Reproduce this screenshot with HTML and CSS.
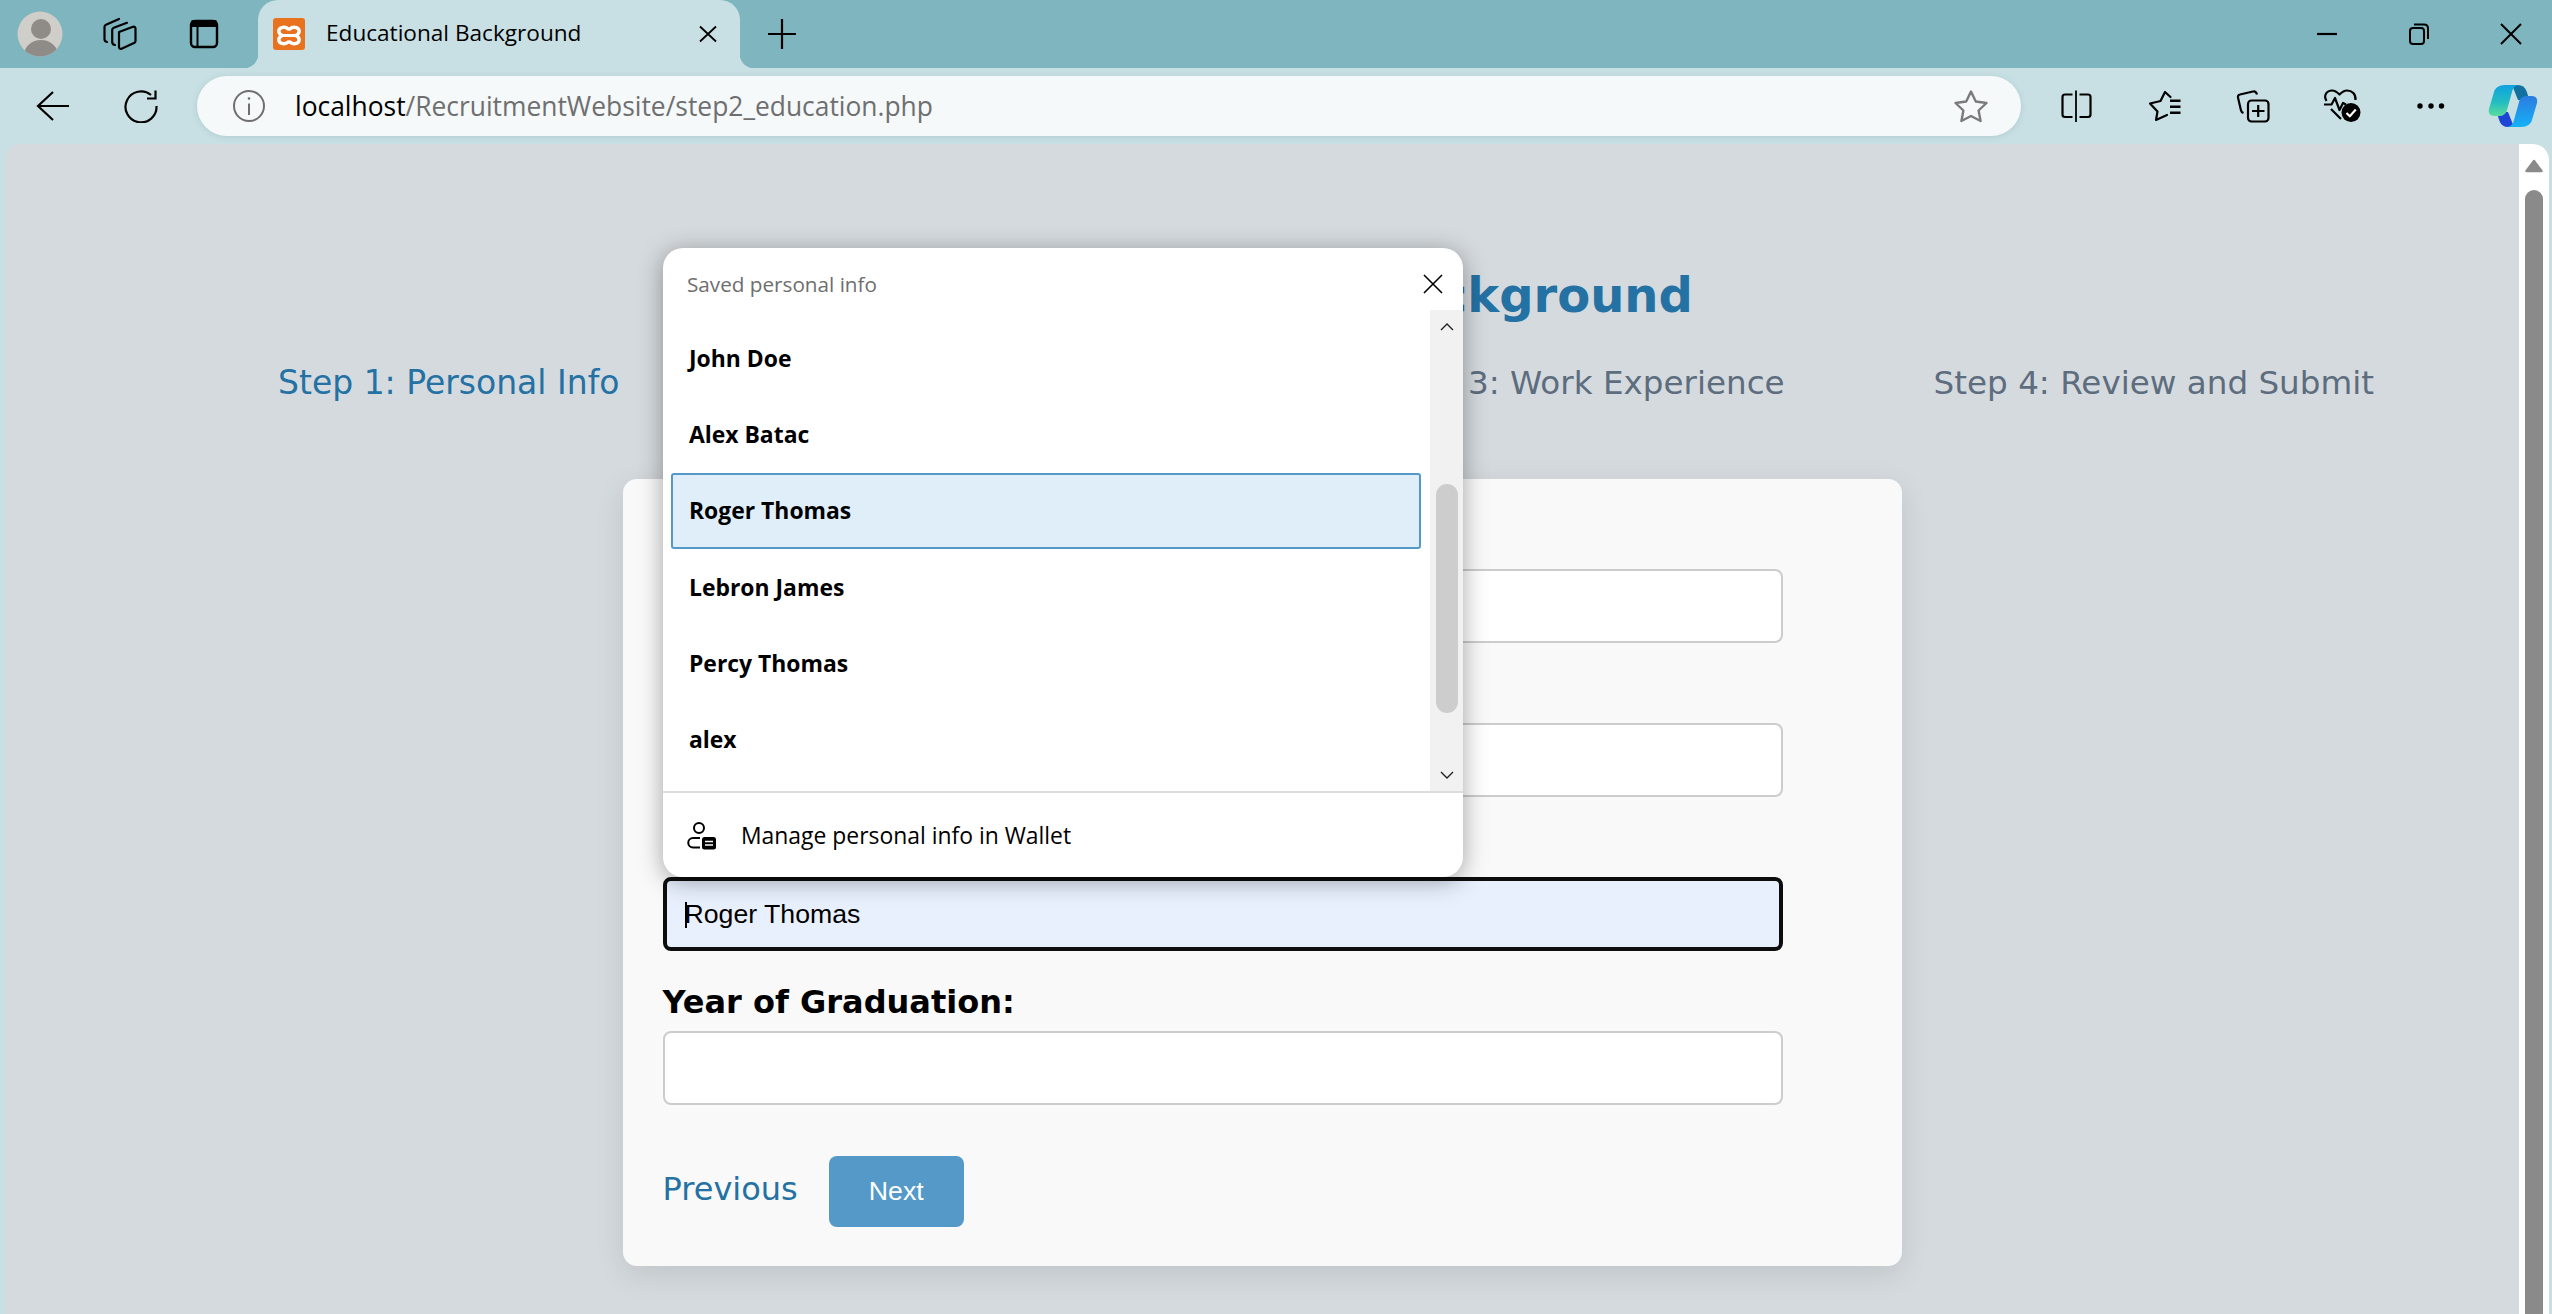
FILE: index.html
```html
<!DOCTYPE html>
<html lang="en">
<head>
  <meta charset="UTF-8">
  <title>Educational Background</title>
  <link rel="stylesheet" href="styles.css">
</head>
<body>
  <!-- tab strip -->
  <div class="tabstrip">
    <div class="strip-btn avatar-btn">
      <svg width="46" height="46" viewBox="17 11 46 46">
        <defs><clipPath id="avatarClip"><circle cx="40" cy="34" r="22.5"/></clipPath></defs>
        <circle cx="40" cy="34" r="22.5" fill="#d0cec9"/>
        <g clip-path="url(#avatarClip)" fill="#8f8b87">
          <circle cx="41" cy="29" r="10"/>
          <ellipse cx="41" cy="55" rx="17" ry="15"/>
        </g>
      </svg>
    </div>
    <div class="strip-btn workspaces-btn">
      <svg width="36" height="36" viewBox="104 16 36 36" fill="none" stroke="#000" stroke-width="2.2" stroke-linecap="round" stroke-linejoin="round">
        <path d="M120 32 L134 26.8 Q136.5 26.3 136.5 28.8 V41 Q136.5 42.6 135 43 L122.5 48.8 Q120 49.2 120 46.8 Z"/>
        <path d="M116 45 Q113.2 44.6 113.2 42 V30 Q113.2 28.4 114.8 27.8 L128 22.8"/>
        <path d="M108 42 Q105.5 41.6 105.5 39 V27 Q105.5 25.4 107 24.8 L120 19"/>
      </svg>
    </div>
    <div class="strip-btn panel-btn">
      <svg width="30" height="30" viewBox="190 19 30 30">
        <rect x="192" y="21" width="26" height="26" rx="4" fill="none" stroke="#000" stroke-width="2.4"/>
        <path d="M192 21.5 Q192 20 194 20 H216 Q218 20 218 21.5 V27 H192 Z" fill="#000"/>
        <path d="M198.5 27 V47" stroke="#000" stroke-width="2"/>
      </svg>
    </div>
    <div class="tab">
      <svg class="favicon" width="32" height="32" viewBox="0 0 32 32">
        <rect width="32" height="32" rx="3" fill="#e9721f"/>
        <path d="M15 11 C13 8.5 6 8.5 5.8 13 C5.8 16 8 17 9.5 17.5 C8 18 5.8 19 5.8 22 C6 26.5 13 26.5 15 24 H17 C19 26.5 26 26.5 26.2 22 C26.2 19 24 18 22.5 17.5 C24 17 26.2 16 26.2 13 C26 8.5 19 8.5 17 11 Z" fill="none" stroke="#fff" stroke-width="3.4" stroke-linejoin="round"/>
        <path d="M10 17.5 H22" stroke="#fff" stroke-width="3"/>
      </svg>
      <span class="tab-title">Educational Background</span>
      <svg class="tab-close" width="18" height="18" viewBox="0 0 18 18"><path d="M1 1.5 L17 16.5 M17 1.5 L1 16.5" stroke="#000" stroke-width="1.8"/></svg>
    </div>
    <div class="new-tab">
      <svg width="30" height="30" viewBox="0 0 30 30"><path d="M1 15 H29 M15 0 V30" stroke="#000" stroke-width="2.2"/></svg>
    </div>
    <div class="win-controls">
      <div class="win-btn"><svg width="22" height="4" viewBox="0 0 22 4"><path d="M1 2 H21" stroke="#000" stroke-width="2.2"/></svg></div>
      <div class="win-btn">
        <svg width="20" height="22" viewBox="0 0 20 22" fill="none" stroke="#000" stroke-width="2">
          <rect x="1" y="5" width="14" height="16" rx="3"/>
          <path d="M5 1.5 H15 Q19 1.5 19 5.5 V16"/>
        </svg>
      </div>
      <div class="win-btn"><svg width="22" height="22" viewBox="0 0 22 22"><path d="M1 1 L21 21 M21 1 L1 21" stroke="#000" stroke-width="2"/></svg></div>
    </div>
  </div>

  <!-- toolbar -->
  <div class="toolbar">
    <div class="nav-btn back-btn">
      <svg width="34" height="30" viewBox="36 90 34 30" fill="none" stroke="#000" stroke-width="2.2"><path d="M38 105 H69 M53 91 L38 105 L53 119"/></svg>
    </div>
    <div class="nav-btn reload-btn">
      <svg width="34" height="34" viewBox="124 89 34 34" fill="none" stroke="#000" stroke-width="2.2"><path d="M151 95 A15.5 15.5 0 1 0 156.5 106"/><path d="M155.5 90.5 V98.5 H147"/></svg>
    </div>
    <div class="address">
      <svg class="info" width="32" height="32" viewBox="0 0 32 32" fill="none" stroke="#6f6f6f" stroke-width="2">
        <circle cx="16" cy="16" r="15"/>
        <path d="M16 13.5 V25" stroke-width="2"/>
        <circle cx="16" cy="8.5" r="1.3" fill="#6f6f6f" stroke="none"/>
      </svg>
      <span class="url"><span class="url-host">localhost</span>/RecruitmentWebsite/step2_education.php</span>
      <svg class="star" width="36" height="34" viewBox="1953 89 36 34" fill="none" stroke="#7b7b7b" stroke-width="2.4" stroke-linejoin="round">
        <path d="M1971 91.5 L1975.8 101.5 L1986.5 103 L1978.6 110.5 L1980.6 121 L1971 116 L1961.4 121 L1963.4 110.5 L1955.5 103 L1966.2 101.5 Z"/>
      </svg>
    </div>
    <div class="tools">
      <div class="tool">
        <svg width="34" height="34" viewBox="2059 89 34 34" fill="none" stroke="#000" stroke-width="2.2">
          <path d="M2072.5 94.5 H2065 Q2062.5 94.5 2062.5 97 V114.5 Q2062.5 117 2065 117 H2072.5"/>
          <path d="M2076 90.5 V122" stroke-width="1.8"/>
          <path d="M2079.5 94.5 H2088 Q2090.5 94.5 2090.5 97 V114.5 Q2090.5 117 2088 117 H2079.5"/>
        </svg>
      </div>
      <div class="tool">
        <svg width="36" height="34" viewBox="2147 89 36 34" fill="none" stroke="#000" stroke-width="2.2" stroke-linejoin="round" stroke-linecap="round">
          <path d="M2170.5 97 L2165 92 L2160.5 101 L2150 103.5 L2157.5 111.5 L2156 120 L2167 115"/>
          <path d="M2170 100.7 H2180.5 M2170 106.7 H2180.5 M2170 112.7 H2180.5" stroke-linecap="butt" stroke-width="2.4"/>
        </svg>
      </div>
      <div class="tool">
        <svg width="36" height="36" viewBox="2235 88 36 36" fill="none" stroke="#000" stroke-width="2.2" stroke-linejoin="round">
          <path d="M2243.5 113 Q2241.5 112.5 2241 110.5 L2238 97.5 Q2237.5 95 2240 94.5 L2253 91.5 Q2256 91 2257 94.5"/>
          <rect x="2248" y="100.5" width="20.5" height="21" rx="3.5"/>
          <path d="M2258.2 105 V117 M2252 111 H2264.5"/>
        </svg>
      </div>
      <div class="tool">
        <svg width="40" height="36" viewBox="2323 90 40 36" fill="none" stroke="#000" stroke-width="2.2" stroke-linejoin="round">
          <path d="M2327.5 103 C2324 97 2328 92.5 2333 92.5 C2336 92.5 2338 94 2340.5 96.5 C2343 94 2345 92.5 2348 92.5 C2353 92.5 2357 96 2356.5 102"/>
          <path d="M2325 106.5 H2332.5 L2336 100 L2340.5 112 L2344 105 L2347 106.5"/>
          <path d="M2332 111 L2342 121"/>
          <circle cx="2352" cy="114.5" r="9.5" fill="#000" stroke="none"/>
          <path d="M2347.5 115 L2350.8 118.3 L2356.8 111.5" stroke="#fff"/>
        </svg>
      </div>
      <div class="tool">
        <svg width="30" height="8" viewBox="0 0 30 8" fill="#000"><circle cx="4" cy="4" r="2.7"/><circle cx="15" cy="4" r="2.7"/><circle cx="25.5" cy="4" r="2.7"/></svg>
      </div>
      <div class="tool copilot">
        <svg width="50" height="44" viewBox="2488 84 50 44">
          <defs>
            <linearGradient id="copLeft" x1="0" y1="0" x2="0" y2="1"><stop offset="0" stop-color="#0ea2e2"/><stop offset=".55" stop-color="#22bdc0"/><stop offset="1" stop-color="#5adc9c"/></linearGradient>
            <linearGradient id="copRight" x1="0" y1="0" x2="0" y2="1"><stop offset="0" stop-color="#2c7be0"/><stop offset="1" stop-color="#14b2f6"/></linearGradient>
          </defs>
          <path d="M2512 85 H2518 C2522 85 2525 87 2526.5 91 L2529.5 100 H2518 Z" fill="#12719f"/>
          <path d="M2514 127 H2508 C2504 127 2501 125 2499.5 121 L2496.5 112 H2508 Z" fill="#1f45d6"/>
          <path d="M2505 85 H2520 C2515 85 2513 88 2512 92 L2507 110 C2506 114 2503 116 2499 116 H2494 C2490 116 2488 113 2489 109 L2494 92 C2495 88 2499 85 2505 85 Z" fill="url(#copLeft)"/>
          <path d="M2521 127 H2506 C2511 127 2513 124 2514 120 L2519 102 C2520 98 2523 96 2527 96 H2532 C2536 96 2538 99 2537 103 L2532 120 C2531 124 2527 127 2521 127 Z" fill="url(#copRight)"/>
        </svg>
      </div>
    </div>
  </div>

  <!-- page viewport -->
  <div class="viewport">
    <div class="content">
      <h1>Step 2: Educational Background</h1>
      <ul class="steps">
        <li class="done">Step 1: Personal Info</li>
        <li class="current">Step 2: Educational Background</li>
        <li>Step 3: Work Experience</li>
        <li>Step 4: Review and Submit</li>
      </ul>

      <form class="card">
        <label>Highest Degree:</label>
        <input type="text">
        <label>Field of Study:</label>
        <input type="text">
        <label>Name of School:</label>
        <div class="focus-wrap">
          <input type="text" class="autofilled" value="Roger Thomas">
          <span class="caret"></span>
        </div>
        <label>Year of Graduation:</label>
        <input type="text">
        <div class="actions">
          <a class="prev">Previous</a>
          <button type="button" class="next">Next</button>
        </div>
      </form>

      <!-- autofill popup -->
      <div class="popup">
        <div class="popup-head">
          <span>Saved personal info</span>
          <svg width="20" height="20" viewBox="0 0 20 20"><path d="M1 1 L19 19 M19 1 L1 19" stroke="#000" stroke-width="1.6"/></svg>
        </div>
        <div class="popup-body">
          <div class="popup-list">
            <div class="popup-item">John Doe</div>
            <div class="popup-item">Alex Batac</div>
            <div class="popup-item selected">Roger Thomas</div>
            <div class="popup-item">Lebron James</div>
            <div class="popup-item">Percy Thomas</div>
            <div class="popup-item">alex</div>
          </div>
          <div class="popup-track">
            <svg width="14" height="8" viewBox="0 0 14 8"><path d="M1 7 L7 1 L13 7" fill="none" stroke="#222" stroke-width="1.4"/></svg>
            <div class="popup-thumb"></div>
            <svg class="track-down" width="14" height="8" viewBox="0 0 14 8"><path d="M1 1 L7 7 L13 1" fill="none" stroke="#222" stroke-width="1.4"/></svg>
          </div>
        </div>
        <div class="popup-foot">
          <svg width="30" height="30" viewBox="687 820 30 30">
            <circle cx="699" cy="828" r="5" fill="none" stroke="#000" stroke-width="2"/>
            <path d="M700 838 H693 A4.6 4.6 0 0 0 693 847.5 H700" fill="none" stroke="#000" stroke-width="2"/>
            <rect x="702" y="837" width="14" height="12.5" rx="2.5" fill="#000"/>
            <path d="M705 841.5 H713 M705 845 H713" stroke="#fff" stroke-width="1.6"/>
          </svg>
          <span>Manage personal info in Wallet</span>
        </div>
      </div>
    </div>

    <div class="page-scroll">
      <svg width="18" height="14" viewBox="0 0 18 14"><path d="M9 2 L16.5 12 H1.5 Z" fill="#8a8a8a" stroke="#8a8a8a" stroke-width="2.4" stroke-linejoin="round"/></svg>
      <div class="page-thumb"></div>
    </div>
  </div>
</body>
</html>
```

FILE: styles.css
```css
* {
  box-sizing: border-box;
}
html, body {
  height: 100%;
}
body {
  margin: 0;
  display: flex;
  flex-direction: column;
  overflow: hidden;
  background-color: #c8e0e4;
  font-family: "Open Sans", "Noto Sans", sans-serif;
  color: #000;
}
svg {
  display: block;
  flex-shrink: 0;
}

/* tab strip */
.tabstrip {
  display: flex;
  align-items: center;
  height: 68px;
  flex-shrink: 0;
  background-color: #7fb5bf;
}
.strip-btn {
  display: flex;
  align-items: center;
  justify-content: center;
  height: 68px;
}
.avatar-btn { width: 80px; }
.workspaces-btn { width: 82px; }
.panel-btn { width: 84px; margin-right: 12px; }
.tab {
  position: relative;
  display: flex;
  align-items: center;
  width: 482px;
  height: 68px;
  padding-left: 15px;
  background-color: #c8e0e4;
  border-radius: 20px 20px 0 0;
}
.tab::before, .tab::after {
  content: "";
  position: absolute;
  bottom: 0;
  width: 14px;
  height: 14px;
}
.tab::before {
  left: -14px;
  background: radial-gradient(circle at 0 0, #7fb5bf 14px, #c8e0e4 14.5px);
}
.tab::after {
  right: -14px;
  background: radial-gradient(circle at 100% 0, #7fb5bf 14px, #c8e0e4 14.5px);
}
.tab-title {
  margin-left: 21px;
  padding-bottom: 3px;
  font-size: 22.6px;
  white-space: nowrap;
}
.tab-close {
  margin-left: auto;
  margin-right: 23px;
}
.new-tab {
  display: flex;
  align-items: center;
  justify-content: center;
  width: 84px;
  height: 68px;
}
.win-controls {
  display: flex;
  margin-left: auto;
  margin-right: -5px;
}
.win-btn {
  display: flex;
  align-items: center;
  justify-content: center;
  width: 92px;
  height: 68px;
}

/* toolbar */
.toolbar {
  display: flex;
  align-items: center;
  height: 76px;
  flex-shrink: 0;
}
.nav-btn {
  display: flex;
  align-items: center;
  justify-content: center;
  height: 76px;
  flex-shrink: 0;
}
.back-btn { width: 106px; }
.reload-btn { width: 70px; margin-right: 21px; }
.address {
  display: flex;
  align-items: center;
  width: 1824px;
  height: 60px;
  flex-shrink: 0;
  padding-left: 36px;
  padding-right: 32px;
  background-color: #f5f9fa;
  border-radius: 30px;
  box-shadow: 0 1px 6px rgba(80, 120, 130, 0.2);
}
.url {
  margin-left: 30px;
  font-size: 26.4px;
  color: #6f6f6f;
  white-space: nowrap;
}
.url-host {
  color: #000;
}
.star {
  margin-left: auto;
}
.tools {
  display: flex;
  align-items: center;
  margin-left: 11px;
}
.tool {
  display: flex;
  align-items: center;
  justify-content: center;
  width: 88.6px;
  height: 76px;
}
.tool.copilot {
  width: 50px;
  margin-left: 13px;
}

/* page viewport */
.viewport {
  display: flex;
  flex: 1;
  min-height: 0;
  margin: 0 3px 0 5px;
  overflow: hidden;
  background-color: #d5dade;
  border-radius: 16px 16px 0 0;
}
.content {
  position: relative;
  flex: 1;
  min-width: 0;
  padding-top: 123px;
  font-family: "DejaVu Sans", sans-serif;
}
h1 {
  margin: 0;
  padding-right: 6px;
  font-size: 48px;
  line-height: 56px;
  font-weight: bold;
  text-align: center;
  color: #2471a3;
}
.steps {
  display: flex;
  gap: 149px;
  margin: 41px 0 0;
  padding: 0 0 0 273px;
  list-style: none;
  font-size: 32.6px;
  line-height: 38px;
  color: #5d6d7e;
  white-space: nowrap;
}
.steps .done {
  font-size: 33px;
  color: #2471a3;
}
.steps .current {
  width: 466px;
  overflow: hidden;
}

/* form */
.card {
  width: 1279px;
  margin: 77px auto 0;
  padding: 0 119px 39px 40px;
  background-color: #f9f9f9;
  border-radius: 14px;
  box-shadow: 0 8px 30px rgba(0, 0, 0, 0.1);
}
.card label {
  display: block;
  height: 80px;
  padding-top: 32px;
  font-size: 32px;
  line-height: 38px;
  font-weight: bold;
}
.card label:first-child {
  height: 90px;
  padding-top: 42px;
}
.card input {
  display: block;
  width: 100%;
  height: 74px;
  padding: 0 20px;
  border: 2px solid #ccc;
  border-radius: 8px;
  background-color: #fff;
  font-family: "Liberation Sans", sans-serif;
  font-size: 26.67px;
  color: #000;
}
.focus-wrap {
  position: relative;
}
.card input.autofilled {
  border: 4px solid #0d0d0d;
  background-color: #e8f0fe;
  padding: 0 18px;
}
.caret {
  position: absolute;
  left: 22px;
  top: 25px;
  width: 2px;
  height: 26px;
  background-color: #000;
}
.actions {
  display: flex;
  align-items: center;
  gap: 31px;
  margin-top: 51px;
}
.prev {
  padding-bottom: 6px;
  font-size: 32px;
  color: #2471a3;
}
.next {
  width: 135px;
  height: 71px;
  border: none;
  border-radius: 8px;
  background-color: #5499c7;
  color: #fff;
  font-family: "Liberation Sans", sans-serif;
  font-size: 26.67px;
}

/* autofill popup */
.popup {
  position: absolute;
  left: 658px;
  top: 104px;
  display: flex;
  flex-direction: column;
  width: 800px;
  height: 629px;
  overflow: hidden;
  background-color: #fff;
  border-radius: 20px;
  box-shadow: 0 4px 24px rgba(0, 0, 0, 0.35);
  font-family: "Open Sans", "Noto Sans", sans-serif;
}
.popup-head {
  display: flex;
  align-items: center;
  justify-content: space-between;
  height: 62px;
  flex-shrink: 0;
  padding: 10px 20px 0 24px;
  font-size: 20.7px;
  color: #6e6e6e;
}
.popup-body {
  display: flex;
  height: 481px;
  flex-shrink: 0;
}
.popup-list {
  flex: 1;
  padding: 10px 9px 0 8px;
}
.popup-item {
  display: flex;
  align-items: center;
  height: 76.3px;
  padding-left: 18px;
  font-size: 22.9px;
  font-weight: 700;
}
.popup-item.selected {
  background-color: #e0eefa;
  border: 2px solid #5499c7;
  border-radius: 3px;
  padding-left: 16px;
}
.popup-track {
  display: flex;
  flex-direction: column;
  align-items: center;
  width: 33px;
  padding-top: 13px;
  background-color: #f1f1f1;
}
.popup-thumb {
  width: 22px;
  height: 229px;
  margin-top: 153px;
  background-color: #cdcdcd;
  border-radius: 11px;
}
.track-down {
  margin-top: 58px;
}
.popup-foot {
  display: flex;
  align-items: center;
  gap: 24px;
  flex: 1;
  padding-left: 24px;
  border-top: 2px solid #ddd;
  font-size: 22.9px;
}

/* page scrollbar */
.page-scroll {
  display: flex;
  flex-direction: column;
  align-items: center;
  width: 30px;
  flex-shrink: 0;
  padding-top: 15px;
  background-color: #fff;
}
.page-thumb {
  flex: 1;
  width: 18px;
  margin-top: 17px;
  background-color: #8a8a8a;
  border-radius: 9px 9px 0 0;
}
```
